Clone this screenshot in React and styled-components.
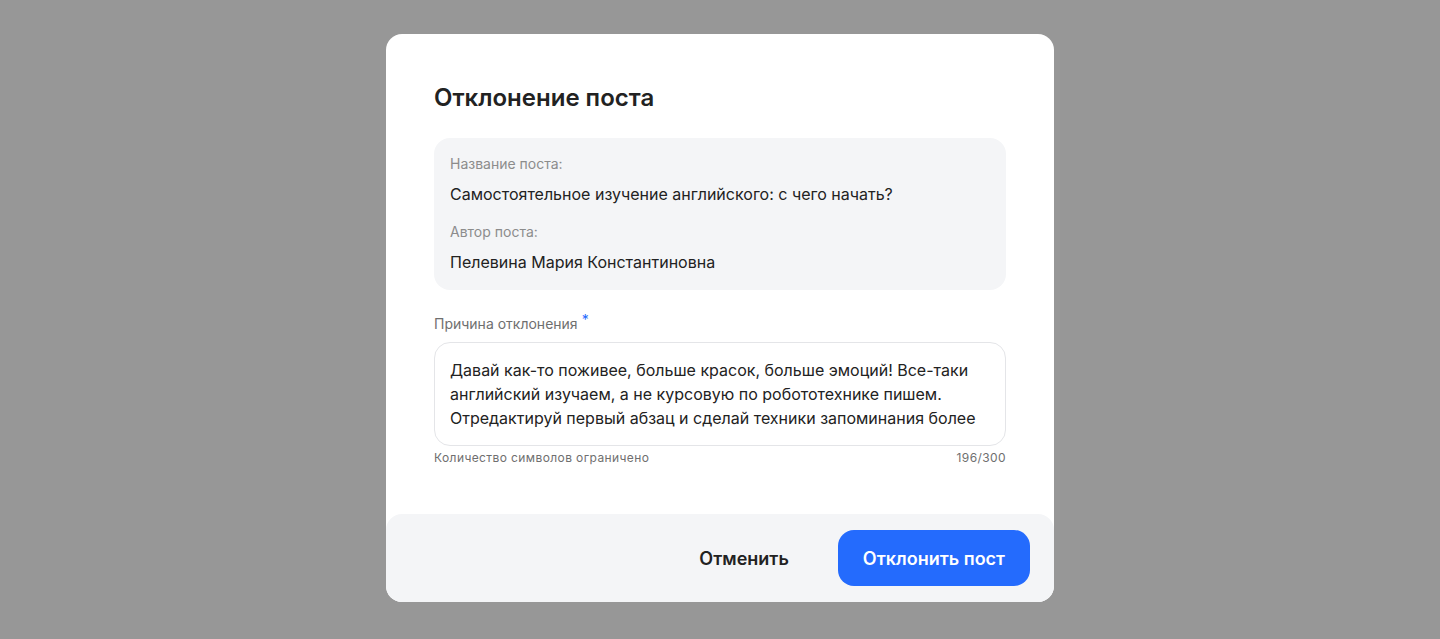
import React from "react";
import styled, { createGlobalStyle } from "styled-components";

const Global = createGlobalStyle`
  * { box-sizing: border-box; }
  html, body { margin: 0; padding: 0; }
  body { font-family: Inter, "Noto Sans", sans-serif; background: #979797; }
`;

const Overlay = styled.div`
  min-height: 100vh;
  display: flex;
  align-items: flex-start;
  justify-content: center;
  padding-top: 34px;
  background: #979797;
`;

const Modal = styled.div`
  width: 668px;
  background: #fff;
  border-radius: 16px;
  overflow: hidden;
  display: flex;
  flex-direction: column;
`;

const Content = styled.div`
  padding: 48px 48px 48px;
  display: flex;
  flex-direction: column;
`;

const Title = styled.h2`
  margin: 0;
  font-size: 24px;
  line-height: 32px;
  font-weight: 600;
  color: #222;
`;

const InfoBox = styled.div`
  margin-top: 24px;
  background: #f4f5f7;
  border-radius: 16px;
  padding: 16px;
  display: flex;
  flex-direction: column;
`;

const InfoLabel = styled.div`
  font-size: 14px;
  line-height: 20px;
  color: #8c8c8c;
  margin-top: ${(p) => (p.$first ? 0 : 16)}px;
`;

const InfoValue = styled.div`
  margin-top: 8px;
  font-size: 16px;
  line-height: 24px;
  color: #222;
`;

const FieldLabel = styled.div`
  margin-top: 24px;
  font-size: 14px;
  line-height: 20px;
  color: #6f6f6f;
`;

const Required = styled.sup`
  color: #246bfd;
  font-size: 14px;
  margin-left: 4px;
  line-height: 0;
  vertical-align: 4px;
`;

const TextBox = styled.div`
  margin-top: 8px;
  height: 104px;
  border: 1px solid #e4e5e8;
  border-radius: 16px;
  padding: 15px;
`;

const TextClip = styled.div`
  height: 72px;
  overflow: hidden;
  font-size: 16px;
  line-height: 24px;
  color: #222;
`;

const CounterRow = styled.div`
  margin-top: 4px;
  display: flex;
  justify-content: space-between;
  font-size: 12px;
  line-height: 16px;
  letter-spacing: 0.4px;
  color: #6f6f6f;
`;

const Footer = styled.div`
  background: #f4f5f7;
  border-radius: 16px 16px 0 0;
  padding: 16px 24px;
  display: flex;
  justify-content: flex-end;
  align-items: center;
  gap: 24px;
`;

const Button = styled.button`
  height: 56px;
  border: none;
  border-radius: 16px;
  padding: 0 25px;
  font-family: inherit;
  font-size: 18px;
  font-weight: 600;
  cursor: pointer;
  background: ${(p) => (p.$primary ? "#246bfd" : "transparent")};
  color: ${(p) => (p.$primary ? "#fff" : "#222")};
`;

export default function App() {
  return (
    <>
      <Global />
      <Overlay>
        <Modal>
          <Content>
            <Title>Отклонение поста</Title>
            <InfoBox>
              <InfoLabel $first>Название поста:</InfoLabel>
              <InfoValue>Самостоятельное изучение английского: с чего начать?</InfoValue>
              <InfoLabel>Автор поста:</InfoLabel>
              <InfoValue>Пелевина Мария Константиновна</InfoValue>
            </InfoBox>
            <FieldLabel>
              Причина отклонения<Required>*</Required>
            </FieldLabel>
            <TextBox>
              <TextClip>
                Давай как-то поживее, больше красок, больше эмоций! Все-таки английский изучаем, а не курсовую по робототехнике пишем. Отредактируй первый абзац и сделай техники запоминания более
              </TextClip>
            </TextBox>
            <CounterRow>
              <span>Количество символов ограничено</span>
              <span>196/300</span>
            </CounterRow>
          </Content>
          <Footer>
            <Button>Отменить</Button>
            <Button $primary>Отклонить пост</Button>
          </Footer>
        </Modal>
      </Overlay>
    </>
  );
}
